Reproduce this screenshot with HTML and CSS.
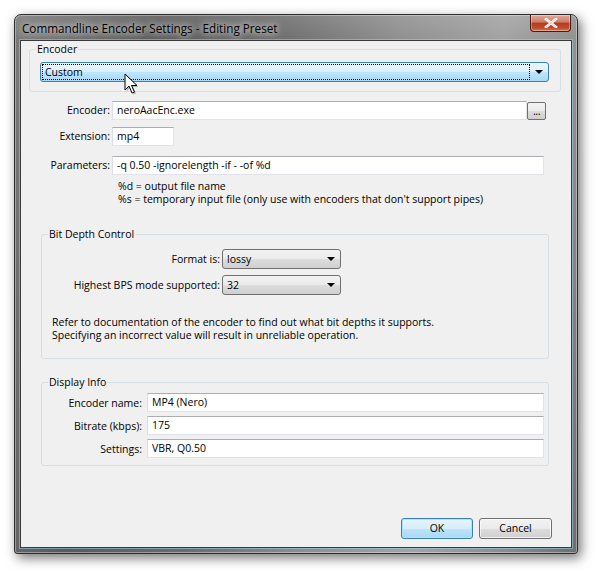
FILE: index.html
```html
<!DOCTYPE html>
<html>
<head>
<meta charset="utf-8">
<title>Commandline Encoder Settings - Editing Preset</title>
<link rel="stylesheet" href="styles.css">
</head>
<body>
<div class="stage">
  <div class="window">
    <div class="titlebar">
      <span class="title">Commandline Encoder Settings - Editing Preset</span>
      <div class="close"><svg width="14" height="10" viewBox="0 0 14 10"><path d="M2 1 L12 9 M12 1 L2 9" stroke="#fff" stroke-width="2.6" stroke-linecap="square"/><path d="M2 1 L12 9 M12 1 L2 9" stroke="#6b1a10" stroke-width="0.6" opacity="0.35"/></svg></div>
    </div>
    <div class="client">
      <div class="group enc-group">
        <span class="legend">Encoder</span>
        <div class="combo hot">
          <div class="focus">Custom</div>
          <span class="arrow"></span>
        </div>
      </div>

      <div class="row r-encoder">
        <label class="lbl">Encoder:</label>
        <div class="input w-encoder">neroAacEnc.exe</div>
        <div class="browse">...</div>
      </div>
      <div class="row r-ext">
        <label class="lbl">Extension:</label>
        <div class="input w-ext">mp4</div>
      </div>
      <div class="row r-params">
        <label class="lbl">Parameters:</label>
        <div class="input w-params">-q 0.50 -ignorelength -if - -of %d</div>
      </div>
      <div class="help">
        <div>%d = output file name</div>
        <div>%s = temporary input file (only use with encoders that don't support pipes)</div>
      </div>

      <div class="group bit-group">
        <span class="legend">Bit Depth Control</span>
        <div class="srow">
          <label class="slbl">Format is:</label>
          <div class="combo sel"><span class="val">lossy</span><span class="arrow"></span></div>
        </div>
        <div class="srow s2">
          <label class="slbl">Highest BPS mode supported:</label>
          <div class="combo sel"><span class="val">32</span><span class="arrow"></span></div>
        </div>
        <div class="note">
          <div>Refer to documentation of the encoder to find out what bit depths it supports.</div>
          <div>Specifying an incorrect value will result in unreliable operation.</div>
        </div>
      </div>

      <div class="group info-group">
        <span class="legend">Display Info</span>
        <div class="irow">
          <label class="ilbl">Encoder name:</label>
          <div class="input w-info">MP4 (Nero)</div>
        </div>
        <div class="irow">
          <label class="ilbl">Bitrate (kbps):</label>
          <div class="input w-info">175</div>
        </div>
        <div class="irow">
          <label class="ilbl">Settings:</label>
          <div class="input w-info">VBR, Q0.50</div>
        </div>
      </div>

      <div class="buttons">
        <div class="btn default">OK</div>
        <div class="btn">Cancel</div>
      </div>

      <svg class="cursor" width="14" height="22" viewBox="0 0 14 22">
        <path d="M1 1 L1 17 L5 13 L8 20 L10.5 19 L7.5 12.5 L13 12.5 Z" fill="#000" opacity="0.25" transform="translate(1.5,1.5)"/>
        <path d="M1 1 L1 17 L5 13 L8 20 L10.5 19 L7.5 12.5 L13 12.5 Z" fill="#fff" stroke="#000" stroke-width="1" stroke-linejoin="miter"/>
      </svg>
    </div>
  </div>
</div>
</body>
</html>
```
FILE: styles.css
```css
html, body {
  margin: 0;
  padding: 0;
  background: #ffffff;
}
body {
  font-family: "Open Sans", "Noto Sans", sans-serif;
  font-size: 10.5px;
  color: #000;
  width: 598px;
  height: 573px;
  overflow: hidden;
}
.stage {
  padding: 14px 0 0 14px;
}
.window {
  width: 564px;
  height: 540px;
  box-sizing: border-box;
  border: 1px solid #2e2e2e;
  border-radius: 7px 7px 3px 3px;
  background:
    linear-gradient(180deg, rgba(255,255,255,0.12) 0px, rgba(255,255,255,0) 25px),
    linear-gradient(100deg, #7a7a7a 0%, #5a5a5a 22%, #6c6c6c 40%, #8e8e8e 58%, #a3a3a3 75%, #8a8a8a 90%, #6e6e6e 100%);
  box-shadow: 3px 4px 12px rgba(0,0,0,0.55), inset 0 0 0 1px rgba(255,255,255,0.35);
  padding: 0 5px 5px 5px;
  display: flex;
  flex-direction: column;
}
.titlebar {
  height: 25px;
  position: relative;
  display: flex;
  align-items: center;
}
.title {
  font-family: "Open Sans", sans-serif;
  font-size: 11.7px;
  padding-left: 2px;
  margin-top: 1px;
  color: #000;
  text-shadow: 0 0 6px rgba(255,255,255,0.9), 0 0 10px rgba(255,255,255,0.7);
}
.close {
  position: absolute;
  right: 1px;
  top: 0;
  width: 41px;
  height: 17px;
  box-sizing: border-box;
  border: 1px solid #4a1c14;
  border-top: none;
  border-radius: 0 0 4px 4px;
  background: linear-gradient(180deg, #e4a79a 0%, #cf7a66 45%, #b23a20 50%, #c24a2c 80%, #d9764e 100%);
  box-shadow: inset 0 0 0 1px rgba(255,255,255,0.35);
  display: flex;
  align-items: center;
  justify-content: center;
}
.client {
  flex: 1;
  background: #f0f0f0;
  border: 1px solid #3a3a3a;
  box-shadow: 0 0 0 1px rgba(160,220,240,0.5);
  position: relative;
  display: flex;
  flex-direction: column;
  padding: 0 0 8px 0;
}
.group {
  position: relative;
  border: 1px solid #d5dfe5;
  border-radius: 3px;
  box-sizing: border-box;
}
.legend {
  position: absolute;
  top: -9px;
  left: 6px;
  padding: 0 1px;
  background: #f0f0f0;
  line-height: 16px;
}
.enc-group {
  margin: 8px 10px 0 8px;
  padding: 12px 11px 9px 10px;
}
.combo {
  position: relative;
  box-sizing: border-box;
  border: 1px solid #707070;
  border-radius: 3px;
  background: linear-gradient(180deg, #f2f2f2 0%, #ebebeb 50%, #dddddd 51%, #cfcfcf 100%);
  display: flex;
  align-items: center;
}
.combo.hot {
  height: 20px;
  border-color: #3c7fb1;
  background: linear-gradient(180deg, #eaf6fd 0%, #d9f0fc 50%, #bee6fd 51%, #a7d9f5 100%);
  padding: 1px 18px 1px 1px;
}
.focus {
  flex: 1;
  height: 16px;
  box-sizing: border-box;
  border: 1px dotted #000;
  line-height: 14px;
  padding-left: 2px;
}
.arrow {
  position: absolute;
  right: 5px;
  top: 50%;
  margin-top: -2px;
  width: 0;
  height: 0;
  border-left: 4px solid transparent;
  border-right: 4px solid transparent;
  border-top: 4px solid #000;
}
.row {
  display: flex;
  align-items: flex-start;
}
.lbl {
  width: 91px;
  box-sizing: border-box;
  text-align: right;
  padding-right: 2px;
  line-height: 19px;
}
.input {
  height: 19px;
  box-sizing: border-box;
  background: #fff;
  border: 1px solid #e2e3ea;
  border-top-color: #abadb3;
  border-left-color: #dbdfe6;
  line-height: 17px;
  padding-left: 4px;
  white-space: nowrap;
}
.r-encoder { margin-top: 9px; }
.r-ext { margin-top: 7px; }
.r-params { margin-top: 10px; }
.w-encoder { width: 415px; }
.w-ext { width: 62px; }
.w-params { width: 432px; }
.browse {
  width: 19px;
  height: 18px;
  margin-top: 1px;
  box-sizing: border-box;
  border: 1px solid #707070;
  border-radius: 2px;
  background: linear-gradient(180deg, #f2f2f2 0%, #ebebeb 50%, #dddddd 51%, #cfcfcf 100%);
  text-align: center;
  line-height: 16px;
  font-size: 11px;
  letter-spacing: -0.5px;
}
.help {
  margin-top: 5px;
  padding-left: 97px;
  line-height: 13px;
}
.bit-group {
  margin: 28px 22px 0 20px;
  padding: 14px 10px 16px 10px;
}
.srow {
  display: flex;
  align-items: center;
}
.srow.s2 { margin-top: 6px; }
.slbl {
  width: 168px;
  text-align: right;
  padding-right: 2px;
}
.sel {
  width: 119px;
  height: 20px;
  padding-left: 4px;
}
.note {
  margin-top: 21px;
  line-height: 13px;
}
.info-group {
  margin: 23px 22px 0 20px;
  padding: 10px 4px 7px 0;
}
.irow {
  display: flex;
  align-items: center;
}
.irow + .irow { margin-top: 4px; }
.ilbl {
  width: 100px;
  text-align: right;
  padding-right: 5px;
}
.w-info { width: 397px; }
.buttons {
  margin-top: auto;
  display: flex;
  justify-content: flex-end;
  gap: 6px;
  padding-right: 19px;
}
.btn {
  width: 73px;
  height: 21px;
  box-sizing: border-box;
  border: 1px solid #707070;
  border-radius: 3px;
  background: linear-gradient(180deg, #f2f2f2 0%, #ebebeb 50%, #dddddd 51%, #cfcfcf 100%);
  box-shadow: inset 0 0 0 1px rgba(255,255,255,0.7);
  text-align: center;
  line-height: 19px;
}
.btn.default {
  width: 72px;
  border-color: #3c7fb1;
  background: linear-gradient(180deg, #e5f4fc 0%, #d6eefb 50%, #bde4f9 51%, #a8d8f4 100%);
  box-shadow: inset 0 0 0 1px #a6e5fb;
}
.cursor {
  position: absolute;
  left: 103px;
  top: 32px;
}
```
